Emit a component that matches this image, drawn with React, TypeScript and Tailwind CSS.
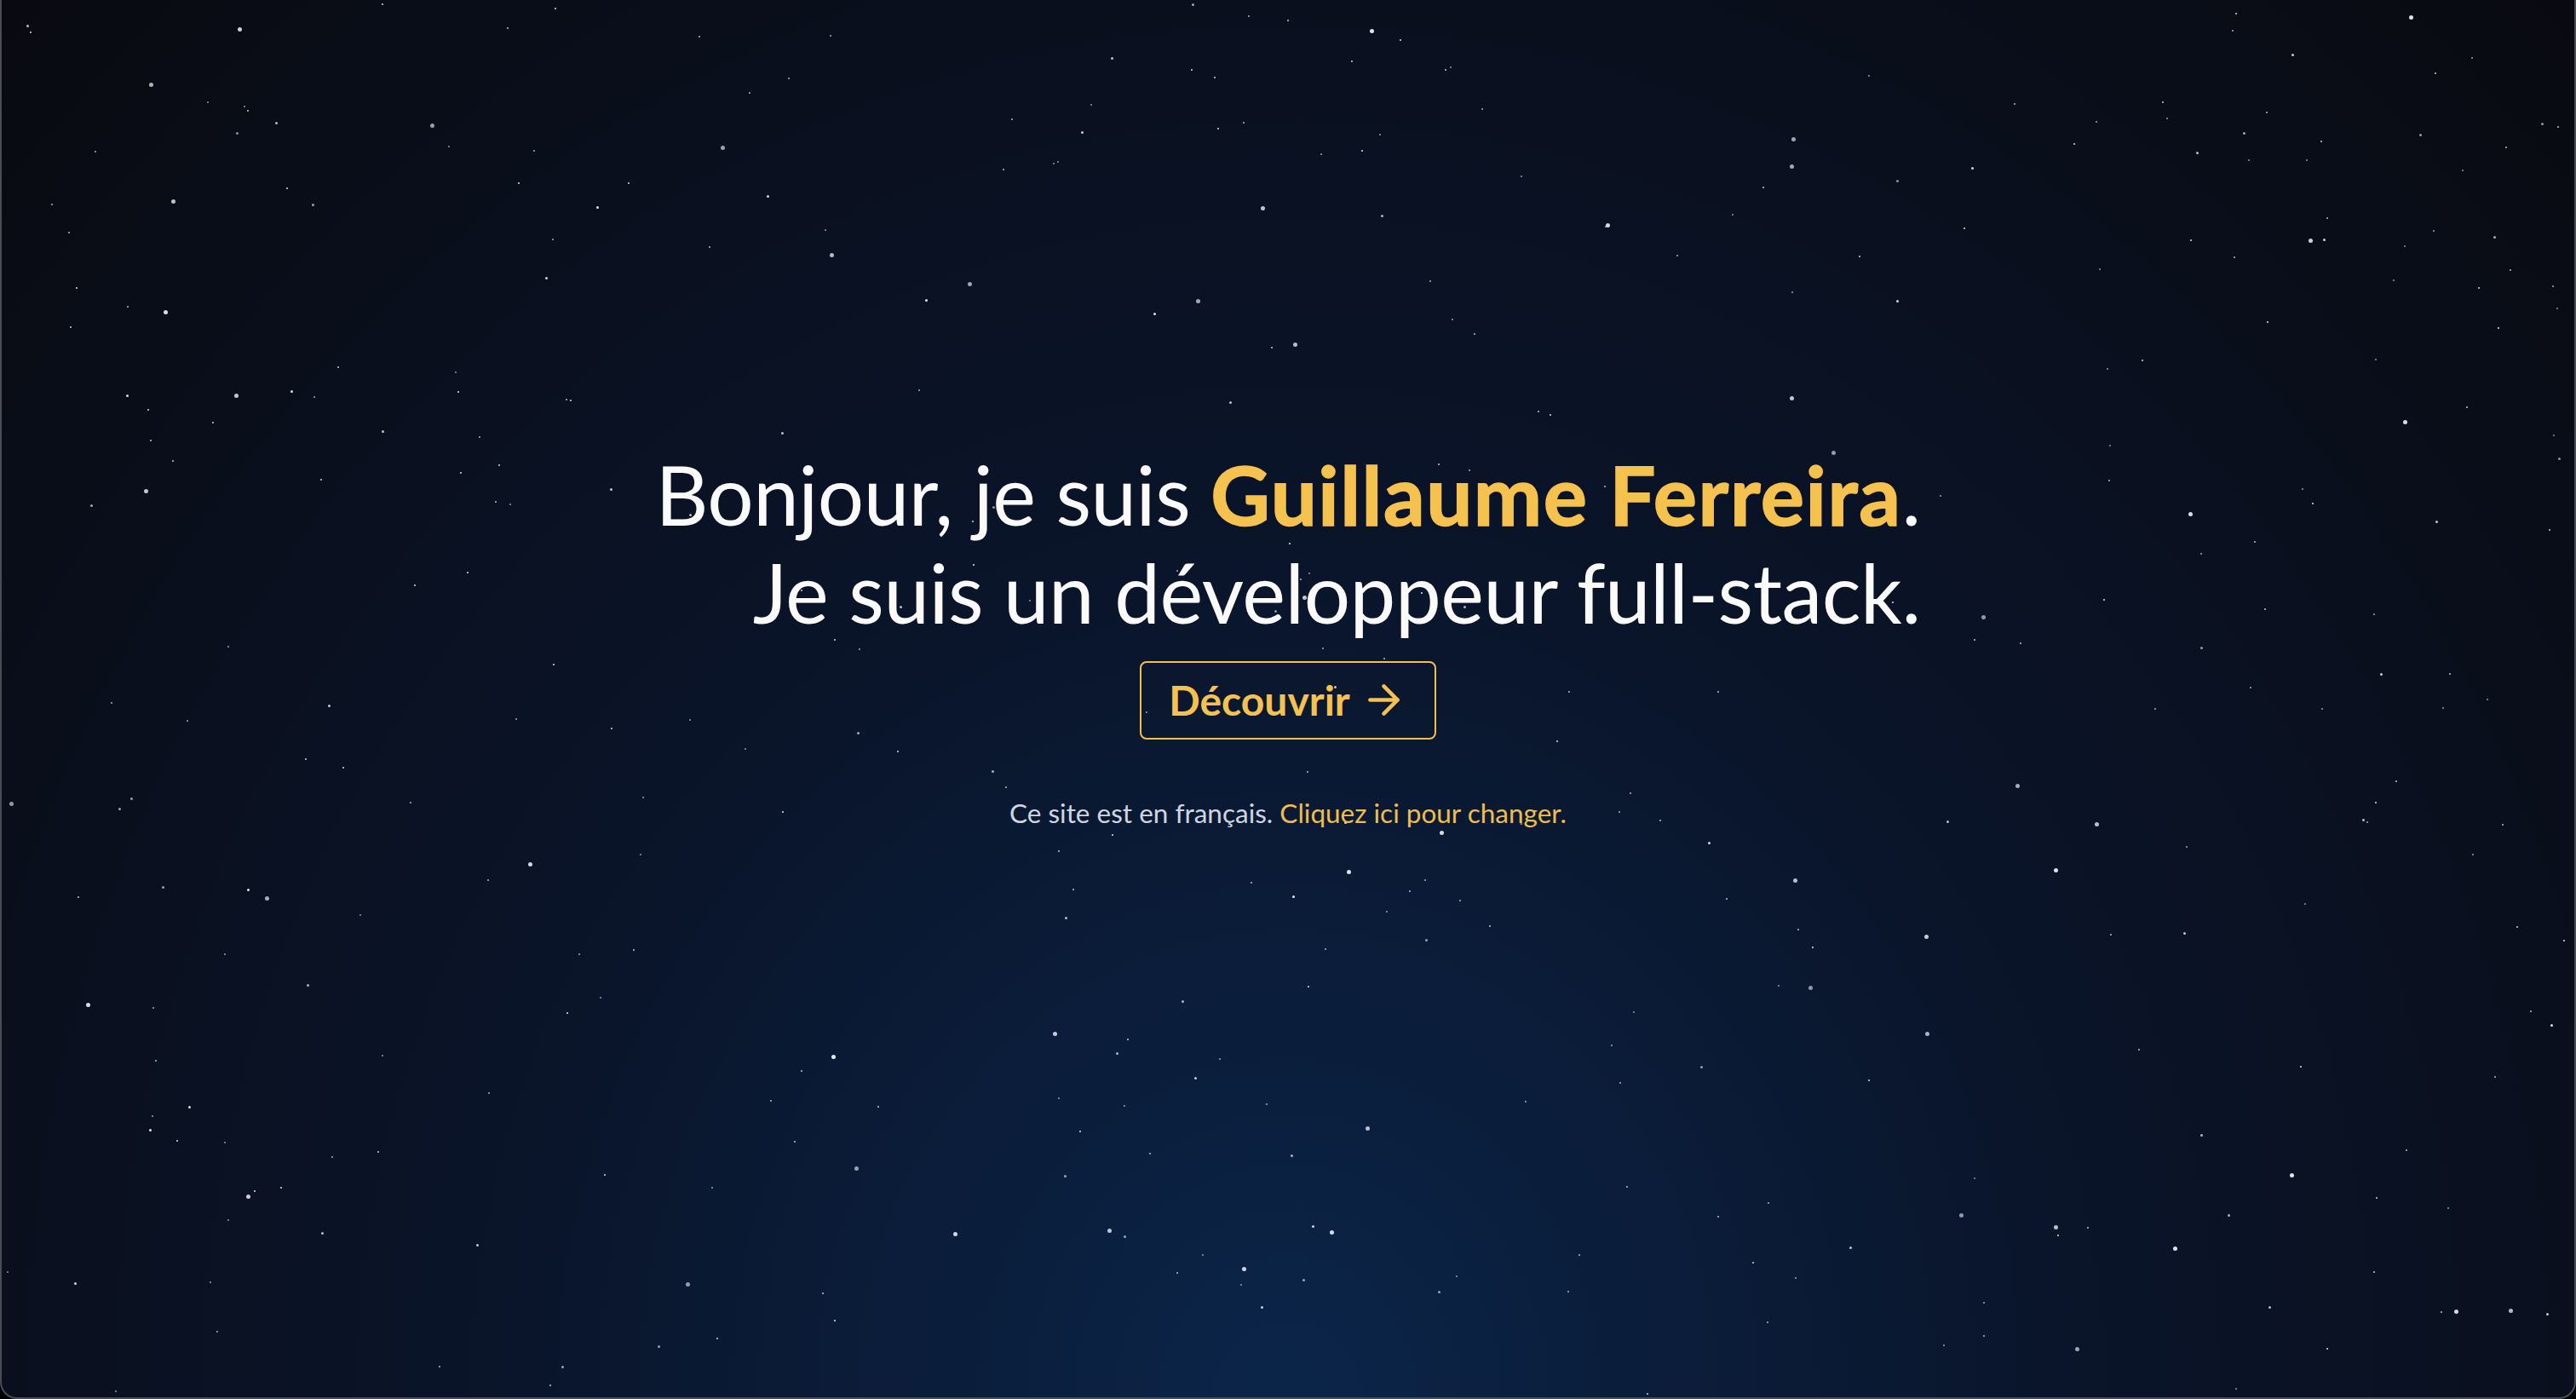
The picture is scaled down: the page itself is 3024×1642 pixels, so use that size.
import { ArrowRight } from "lucide-react";

type Star = { x: number; y: number; size: number; opacity: number };

// small seeded generator so the sky stays the same on every render
function rng(seed: number) {
  let a = seed;
  return () => {
    a |= 0;
    a = (a + 0x6d2b79f5) | 0;
    let t = Math.imul(a ^ (a >>> 15), 1 | a);
    t = (t + Math.imul(t ^ (t >>> 7), 61 | t)) ^ t;
    return ((t ^ (t >>> 14)) >>> 0) / 4294967296;
  };
}

function makeStars(): Star[] {
  const rand = rng(20240611);
  const stars: Star[] = [];
  const groups: [number, number][] = [
    [280, 2],
    [80, 3],
    [55, 5],
  ];
  for (const [count, size] of groups) {
    for (let i = 0; i < count; i++) {
      stars.push({
        x: rand() * 100,
        y: rand() * 100,
        size,
        opacity: 0.6 + rand() * 0.4,
      });
    }
  }
  return stars;
}

const STARS = makeStars();

function StarField() {
  return (
    <div className="pointer-events-none absolute inset-0">
      {STARS.map((s, i) => (
        <span
          key={i}
          className="absolute rounded-full bg-[#e6ebf2]"
          style={{
            left: `${s.x}%`,
            top: `${s.y}%`,
            width: s.size,
            height: s.size,
            opacity: s.opacity,
          }}
        />
      ))}
    </div>
  );
}

export default function App() {
  return (
    <div className="h-screen w-full bg-black font-['Lato','Noto_Sans',sans-serif]">
      <main className="relative flex h-full w-full flex-col items-center justify-center overflow-hidden rounded-b-[20px] border-x-2 border-b-2 border-[#4a4d53] bg-[radial-gradient(ellipse_at_bottom,#0b2549_0%,#0a1429_45%,#090a10_100%)] pb-[145px]">
        <StarField />

        <h1 className="relative text-right text-[96px] font-normal leading-[1.2] tracking-[-0.5px] text-[#fafafa]">
          Bonjour, je suis{" "}
          <span className="font-bold tracking-[1.5px] text-[#f5c14f] [-webkit-text-stroke:1.5px_#f5c14f]">
            Guillaume Ferreira
          </span>
          .
          <br />
          Je suis un développeur full-stack.
        </h1>

        <button className="relative mt-6 flex items-center gap-3 rounded-[8px] border-2 border-[#f2bf4d] px-8 py-[15px] text-[48px] font-bold leading-[1.2] text-[#f5c14f]">
          Découvrir
          <ArrowRight size={55} strokeWidth={2} />
        </button>

        <p className="relative mt-[68px] text-[31.5px] leading-[1.2] text-[#cfd6e0]">
          Ce site est en français.{" "}
          <a href="#" className="text-[#efbd4f]">
            Cliquez ici pour changer.
          </a>
        </p>
      </main>
    </div>
  );
}
